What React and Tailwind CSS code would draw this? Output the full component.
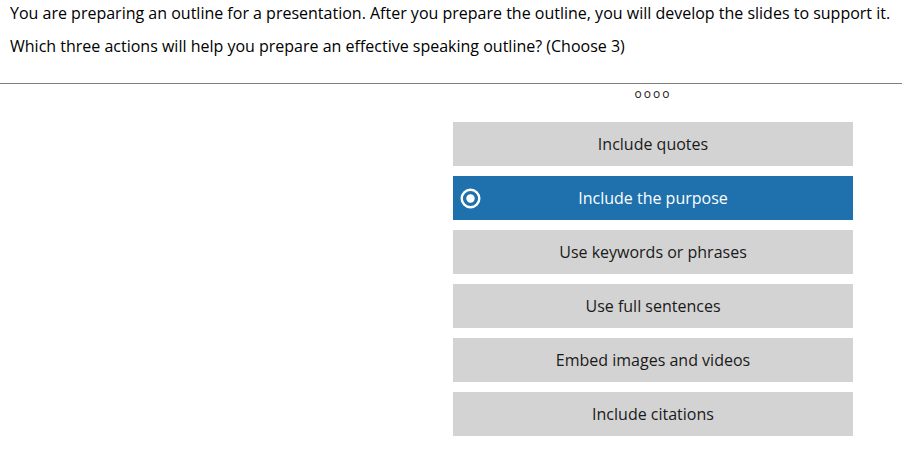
export default function App() {
  const options = [
    { label: "Include quotes", selected: false },
    { label: "Include the purpose", selected: true },
    { label: "Use keywords or phrases", selected: false },
    { label: "Use full sentences", selected: false },
    { label: "Embed images and videos", selected: false },
    { label: "Include citations", selected: false },
  ];

  return (
    <div
      className="w-[902px] h-[461px] bg-white text-black overflow-hidden"
      style={{ fontFamily: '"Open Sans", "Noto Sans", sans-serif' }}
    >
      <div className="px-[10px] pt-[2px] pb-[26px] text-[16px] leading-[22px]">
        <p className="mb-[11px]">
          You are preparing an outline for a presentation. After you prepare the outline, you will develop the slides to support it.
        </p>
        <p>Which three actions will help you prepare an effective speaking outline? (Choose 3)</p>
      </div>
      <div className="h-px bg-[#808080]" />
      <div className="flex">
        <div className="w-[453px]" />
        <div className="w-[400px] flex flex-col">
          <div className="h-[24px] flex items-center justify-center text-[12px] tracking-[2px] text-[#1a1a1a] pb-[4px]">
            oooo
          </div>
          <div className="mt-[14px] flex flex-col gap-[10px]">
            {options.map((o) => (
              <div
                key={o.label}
                className={
                  o.selected
                    ? "relative h-[44px] flex items-center justify-center bg-[#1e71ad] text-white text-[16px]"
                    : "relative h-[44px] flex items-center justify-center bg-[#d3d3d3] text-[#1a1a1a] text-[16px]"
                }
              >
                {o.selected && (
                  <svg
                    className="absolute left-[7px] top-[12px]"
                    width="21"
                    height="21"
                    viewBox="0 0 21 21"
                  >
                    <circle cx="10.5" cy="10.5" r="8.8" fill="none" stroke="white" strokeWidth="2.4" />
                    <circle cx="10.5" cy="10.5" r="4.2" fill="white" />
                  </svg>
                )}
                {o.label}
              </div>
            ))}
          </div>
        </div>
      </div>
    </div>
  );
}
